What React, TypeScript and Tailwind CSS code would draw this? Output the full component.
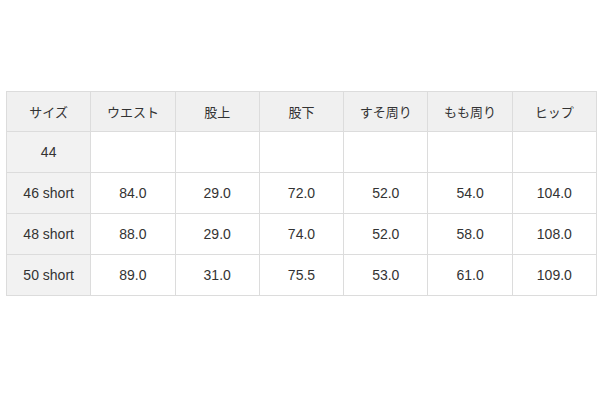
const headers = ["サイズ", "ウエスト", "股上", "股下", "すそ周り", "もも周り", "ヒップ"];

const rows = [
  ["44", "", "", "", "", "", ""],
  ["46 short", "84.0", "29.0", "72.0", "52.0", "54.0", "104.0"],
  ["48 short", "88.0", "29.0", "74.0", "52.0", "58.0", "108.0"],
  ["50 short", "89.0", "31.0", "75.5", "53.0", "61.0", "109.0"],
];

export default function App() {
  return (
    <div className="h-[400px] w-[600px] bg-white pl-[6px] pt-[91px] font-['Liberation_Sans','Noto_Sans_CJK_JP',sans-serif] text-[14px] text-[#333]">
      <table className="w-[591px] table-fixed border-collapse">
        <thead>
          <tr className="h-[40px] bg-[#f0f0f0]">
            {headers.map((h) => (
              <th
                key={h}
                className="border border-[#dcdcdc] text-center text-[13px] font-normal font-['Noto_Sans_CJK_JP',sans-serif]"
              >
                {h}
              </th>
            ))}
          </tr>
        </thead>
        <tbody>
          {rows.map((r) => (
            <tr key={r[0]} className="h-[41px]">
              {r.map((c, i) => (
                <td
                  key={i}
                  className={
                    i === 0
                      ? "border border-[#dcdcdc] bg-[#f2f2f2] text-center"
                      : "border border-[#dcdcdc] text-center"
                  }
                >
                  {c}
                </td>
              ))}
            </tr>
          ))}
        </tbody>
      </table>
    </div>
  );
}
